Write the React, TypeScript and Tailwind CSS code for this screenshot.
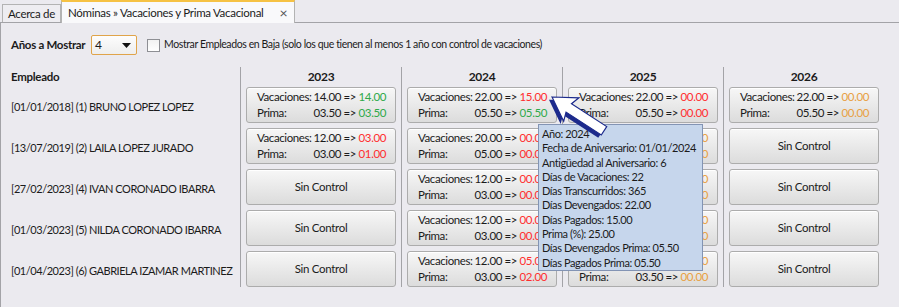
import React from 'react';

type Cell =
  | { kind: 'none' }
  | { kind: 'vac'; vac: string; vacPag: string; vacColor: string; prima: string; primaPag: string; primaColor: string };

const GREEN = 'text-[#2fa94a]';
const RED = 'text-[#ff2e2e]';
const ORANGE = 'text-[#e8a042]';

const none: Cell = { kind: 'none' };
const v = (vac: string, vacPag: string, vacColor: string, prima: string, primaPag: string, primaColor: string): Cell => ({
  kind: 'vac', vac, vacPag, vacColor, prima, primaPag, primaColor,
});

const empleados = [
  '[01/01/2018] (1) BRUNO LOPEZ LOPEZ',
  '[13/07/2019] (2) LAILA LOPEZ JURADO',
  '[27/02/2023] (4) IVAN CORONADO IBARRA',
  '[01/03/2023] (5) NILDA CORONADO IBARRA',
  '[01/04/2023] (6) GABRIELA IZAMAR MARTINEZ',
];

const years: { year: string; cells: Cell[] }[] = [
  {
    year: '2023',
    cells: [v('14.00', '14.00', GREEN, '03.50', '03.50', GREEN), v('12.00', '03.00', RED, '03.00', '01.00', RED), none, none, none],
  },
  {
    year: '2024',
    cells: [
      v('22.00', '15.00', RED, '05.50', '05.50', GREEN),
      v('20.00', '00.00', RED, '05.00', '00.00', RED),
      v('12.00', '00.00', RED, '03.00', '00.00', RED),
      v('12.00', '00.00', RED, '03.00', '00.00', RED),
      v('12.00', '05.00', RED, '03.00', '02.00', RED),
    ],
  },
  {
    year: '2025',
    cells: [
      v('22.00', '00.00', RED, '05.50', '00.00', RED),
      v('22.00', '00.00', ORANGE, '05.50', '00.00', ORANGE),
      v('14.00', '00.00', ORANGE, '03.50', '00.00', ORANGE),
      v('14.00', '00.00', ORANGE, '03.50', '00.00', ORANGE),
      v('14.00', '00.00', ORANGE, '03.50', '00.00', ORANGE),
    ],
  },
  {
    year: '2026',
    cells: [v('22.00', '00.00', ORANGE, '05.50', '00.00', ORANGE), none, none, none, none],
  },
];

const tooltipLines = [
  'Año: 2024',
  'Fecha de Aniversario: 01/01/2024',
  'Antigüedad al Aniversario: 6',
  'Días de Vacaciones: 22',
  'Días Transcurridos: 365',
  'Días Devengados: 22.00',
  'Días Pagados: 15.00',
  'Prima (%): 25.00',
  'Días Devengados Prima: 05.50',
  'Días Pagados Prima: 05.50',
];

const CellButton: React.FC<{ cell: Cell }> = ({ cell }) => (
  <div className="h-[36px] rounded-[3px] border border-[#acacac] bg-gradient-to-b from-[#f7f7f7] to-[#dcdcdc] shadow-[inset_0_1px_0_#ffffff]">
    {cell.kind === 'none' ? (
      <div className="h-full flex items-center justify-center text-[11.5px]">Sin Control</div>
    ) : (
      <div className="h-full flex flex-col justify-center pl-[10px] pr-[9px] leading-[16px] text-[11.5px] tracking-[-0.4px] whitespace-nowrap">
        <div className="flex justify-between">
          <span>Vacaciones:</span>
          <span>
            {cell.vac} =&gt; <span className={cell.vacColor}>{cell.vacPag}</span>
          </span>
        </div>
        <div className="flex justify-between">
          <span>Prima:</span>
          <span>
            {cell.prima} =&gt; <span className={cell.primaColor}>{cell.primaPag}</span>
          </span>
        </div>
      </div>
    )}
  </div>
);

export default function App() {
  return (
    <div className="w-[899px] h-[307px] relative overflow-hidden bg-[#ebeaef] text-[11px] text-[#1b1b1b] font-['Lato','Open_Sans',sans-serif] tracking-[-0.3px] whitespace-nowrap">
      {/* tabs */}
      <div className="h-[23px] flex items-end border-b border-[#a3a3a7]">
        <div className="ml-[2px] h-[18px] px-[5px] flex items-center border border-b-0 border-[#b3b3b3] bg-[#eeedf1] text-[11.5px]">
          Acerca de
        </div>
        <div className="-mb-px h-[23px] pl-[6px] pr-[7px] flex items-center gap-[16px] border border-b-0 border-[#b3b3b3] border-t-2 border-t-[#f6c244] bg-[#f9f9fb] text-[11.5px]">
          <span>Nóminas » Vacaciones y Prima Vacacional</span>
          <span className="text-[14px] text-[#555] leading-none">×</span>
        </div>
      </div>

      {/* panel */}
      <div className="h-[284px] border-l border-[#a3a3a7] flex flex-col">
        <div className="mt-[12px] h-[20px] pl-[10px] flex items-center">
          <span className="font-bold w-[80px] text-[11.5px]">Años a Mostrar</span>
          <div className="w-[46px] h-[20px] flex items-center justify-between pl-[3px] pr-[5px] rounded-[2px] border border-[#e0a44a] bg-gradient-to-b from-[#fdfdfd] to-[#eeeeee] text-[12px]">
            <span>4</span>
            <svg width="9" height="5" viewBox="0 0 9 5">
              <path d="M0 0 H9 L4.5 5 Z" fill="#111" />
            </svg>
          </div>
          <div className="ml-[10px] w-[13px] h-[13px] border border-[#8e8f94] bg-gradient-to-b from-[#f2f2f2] to-[#ffffff]" />
          <span className="ml-[4px] text-[10.5px] tracking-[-0.4px]">
            Mostrar Empleados en Baja (solo los que tienen al menos 1 año con control de vacaciones)
          </span>
        </div>

        <div className="mt-[12px] flex">
          <div className="w-[239px] pl-[10px] text-[11px] tracking-[-0.45px]">
            <div className="h-[20px] flex items-center font-bold text-[11.5px] tracking-[-0.3px]">Empleado</div>
            <div className="flex flex-col">
              {empleados.map((e) => (
                <div key={e} className="h-[41px] flex items-center pb-[1px]">
                  {e}
                </div>
              ))}
            </div>
          </div>
          {years.map((y) => (
            <div key={y.year} className="w-[161px] h-[220px] border-l border-[#a3a3a7] px-[5px]">
              <div className="h-[20px] flex items-center justify-center font-bold text-[12px]">{y.year}</div>
              <div className="flex flex-col gap-[5px]">
                {y.cells.map((c, i) => (
                  <CellButton key={i} cell={c} />
                ))}
              </div>
            </div>
          ))}
        </div>
      </div>

      {/* tooltip */}
      <div className="absolute left-[538px] top-[124px] w-[165px] h-[147px] border border-[#8394b4] bg-[#c6d6ec] pl-[3px] pt-[2px] leading-[14.3px] text-[11px] tracking-[-0.4px]">
        {tooltipLines.map((l) => (
          <div key={l}>{l}</div>
        ))}
      </div>

      {/* mouse pointer */}
      <svg className="absolute left-[540px] top-[85px]" width="80" height="60" viewBox="0 0 80 60">
        <g transform="translate(12 12) rotate(33)">
          <polygon points="0,0 23,-14 20,-5 62,-5 62,5 20,5 23,14" fill="#1c2a8c" transform="translate(-1 4)" />
          <polygon points="0,0 23,-14 20,-5 62,-5 62,5 20,5 23,14" fill="#ffffff" stroke="#1c2a8c" strokeWidth="1.2" />
        </g>
      </svg>
    </div>
  );
}
